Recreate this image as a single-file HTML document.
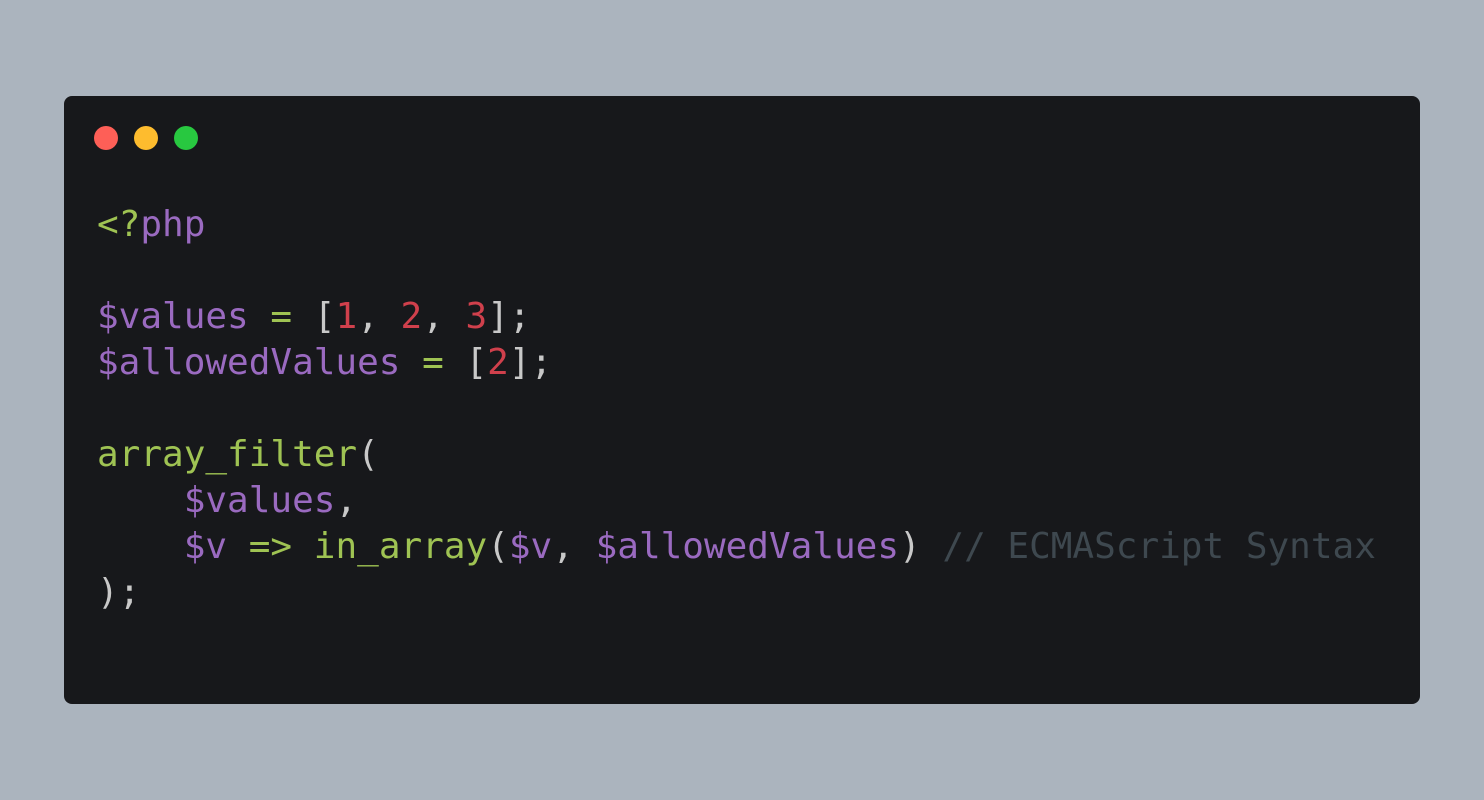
<!DOCTYPE html>
<html><head><meta charset="utf-8"><style>
html,body{margin:0;padding:0;}
body{width:1484px;height:800px;background:#abb4be;position:relative;overflow:hidden;}
.win{position:absolute;left:64px;top:96px;width:1356px;height:608px;background:#17181b;border-radius:8px;}
.dot{position:absolute;top:30px;width:24px;height:24px;border-radius:50%;}
pre{position:absolute;left:33px;top:106px;margin:0;font-family:"DejaVu Sans Mono","Liberation Mono",monospace;font-size:36px;line-height:46px;color:#c8c8c8;}
.p{color:#9a6ac0}.g{color:#9fc353}.r{color:#d0404c}.c{color:#3e484f}
</style></head><body>
<div class="win">
<div class="dot" style="left:30px;background:#fe5f57"></div>
<div class="dot" style="left:70px;background:#febc2e"></div>
<div class="dot" style="left:110px;background:#28c840"></div>
<pre><span class="g">&lt;?</span><span class="p">php</span>

<span class="p">$values</span> <span class="g">=</span> [<span class="r">1</span>, <span class="r">2</span>, <span class="r">3</span>];
<span class="p">$allowedValues</span> <span class="g">=</span> [<span class="r">2</span>];

<span class="g">array_filter</span>(
    <span class="p">$values</span>,
    <span class="p">$v</span> <span class="g">=&gt;</span> <span class="g">in_array</span>(<span class="p">$v</span>, <span class="p">$allowedValues</span>) <span class="c">// ECMAScript Syntax</span>
);</pre>
</div>
</body></html>
